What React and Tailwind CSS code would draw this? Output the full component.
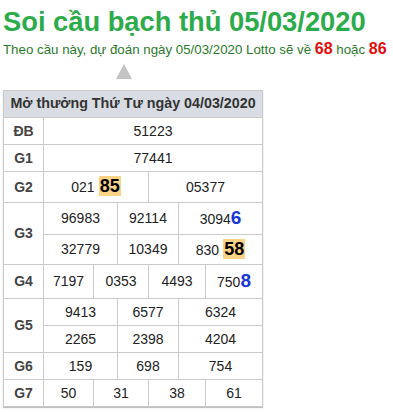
import React from 'react';

const Hi = ({ children }) => (
  <span className="ml-[4px] bg-[#fdd385] px-[1px] text-[18px] font-bold text-black leading-[20px]">{children}</span>
);

const Blue = ({ children }) => (
  <span className="text-[19px] font-bold text-[#1537d6] leading-[20px]">{children}</span>
);

const Label = ({ children, tall }) => (
  <div className={`flex items-center justify-center bg-white font-bold text-[#444] ${tall ? 'row-span-2' : ''}`}>
    {children}
  </div>
);

const Cell = ({ span, children }) => {
  const spans = { 1: 'col-span-1', 2: 'col-span-2', 3: 'col-span-3', 6: 'col-span-6' };
  return (
    <div className={`flex items-center justify-center bg-white text-[#222] ${spans[span]}`}>
      <span>{children}</span>
    </div>
  );
};

const App = () => {
  return (
    <div className="min-h-[412px] bg-white px-[3px] font-['Liberation_Sans',Arial,sans-serif]">
      <h1 className="pt-[6px] text-[27.3px] font-bold leading-[32px] text-[#2cab4b]">
        Soi cầu bạch thủ 05/03/2020
      </h1>
      <p className="mt-[1px] whitespace-nowrap text-[13.3px] leading-[20px] text-[#2b7a2b]">
        Theo cầu này, dự đoán ngày 05/03/2020 Lotto sẽ về{' '}
        <span className="text-[16px] font-bold text-[#e20d0d]">68</span> hoặc{' '}
        <span className="text-[16px] font-bold text-[#e20d0d]">86</span>
      </p>
      <div className="ml-[113px] mt-[4px] h-0 w-0 border-x-[8px] border-b-[15px] border-x-transparent border-b-[#c4c4c4]" />

      <div className="mt-[11px] grid w-fit grid-cols-[39px_49px_23px_30px_29px_26px_56px] grid-rows-[26px_26px_26px_30px_31px_29px_33px_26px_26px_26px_26px] gap-px border border-[#cacaca] bg-[#cacaca] text-[14px] shadow-[0_1px_1px_rgba(0,0,0,0.25)]">
        <div className="col-span-7 flex items-center justify-center bg-[#d9dde3] text-[14.3px] font-bold text-[#333]">
          Mở thưởng Thứ Tư ngày 04/03/2020
        </div>

        <Label>ĐB</Label>
        <Cell span={6}>51223</Cell>

        <Label>G1</Label>
        <Cell span={6}>77441</Cell>

        <Label>G2</Label>
        <Cell span={3}>021<Hi>85</Hi></Cell>
        <Cell span={3}>05377</Cell>

        <Label tall>G3</Label>
        <Cell span={2}>96983</Cell>
        <Cell span={2}>92114</Cell>
        <Cell span={2}>3094<Blue>6</Blue></Cell>
        <Cell span={2}>32779</Cell>
        <Cell span={2}>10349</Cell>
        <Cell span={2}>830<Hi>58</Hi></Cell>

        <Label>G4</Label>
        <Cell span={1}>7197</Cell>
        <Cell span={2}>0353</Cell>
        <Cell span={2}>4493</Cell>
        <Cell span={1}>750<Blue>8</Blue></Cell>

        <Label tall>G5</Label>
        <Cell span={2}>9413</Cell>
        <Cell span={2}>6577</Cell>
        <Cell span={2}>6324</Cell>
        <Cell span={2}>2265</Cell>
        <Cell span={2}>2398</Cell>
        <Cell span={2}>4204</Cell>

        <Label>G6</Label>
        <Cell span={2}>159</Cell>
        <Cell span={2}>698</Cell>
        <Cell span={2}>754</Cell>

        <Label>G7</Label>
        <Cell span={1}>50</Cell>
        <Cell span={2}>31</Cell>
        <Cell span={2}>38</Cell>
        <Cell span={1}>61</Cell>
      </div>
    </div>
  );
};

export default App;
